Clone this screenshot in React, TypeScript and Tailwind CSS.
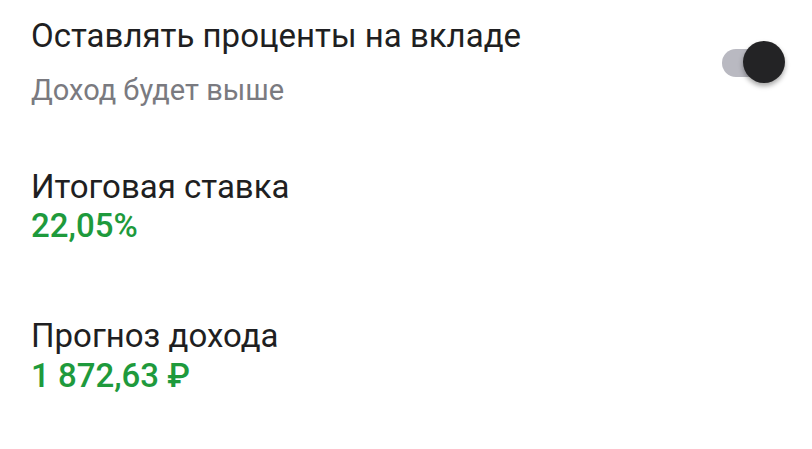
import React from "react";

export default function App() {
  return (
    <div className="w-[812px] h-[449px] bg-white overflow-hidden" style={{ fontFamily: "Roboto, 'Noto Sans', sans-serif" }}>
      <div className="flex items-start justify-between pl-[31px] pr-[27px] pt-[16px]">
        <div className="flex flex-col">
          <div className="text-[33px] leading-[40px] text-[#1f1f22]">Оставлять проценты на вкладе</div>
          <div className="mt-[16px] text-[29px] leading-[36px] text-[#7a7a80]">Доход будет выше</div>
        </div>
        <div className="relative mt-[25px] w-[63px] h-[42px]">
          <div className="absolute left-0 top-[8px] w-[52px] h-[28px] rounded-full bg-[#b9b9c1]" />
          <div className="absolute right-0 top-0 w-[42px] h-[42px] rounded-full bg-[#232325] shadow-[0_3px_5px_rgba(0,0,0,0.35)]" />
        </div>
      </div>
      <div className="pl-[31px] mt-[59px] flex flex-col">
        <div className="text-[33px] leading-[40px] text-[#1f1f22]">Итоговая ставка</div>
        <div className="text-[33px] leading-[38px] font-medium text-[#1e9a3c]">22,05%</div>
        <div className="mt-[71px] text-[33px] leading-[40px] text-[#1f1f22]">Прогноз дохода</div>
        <div className="mt-[1px] text-[33px] leading-[38px] font-medium text-[#1e9a3c]">1 872,63 ₽</div>
      </div>
    </div>
  );
}
